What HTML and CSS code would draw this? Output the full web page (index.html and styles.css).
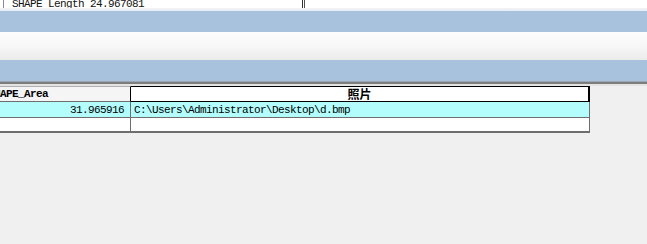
FILE: index.html
```html
<!DOCTYPE html>
<html>
<head>
<meta charset="utf-8">
<link rel="stylesheet" href="styles.css">
</head>
<body>
<div class="top">
  <div class="top-row">
    <div class="top-cell"><span class="top-text">SHAPE Length 24.967081</span></div>
    <div class="top-gap"></div>
    <div class="top-rest"></div>
  </div>
</div>
<div class="top-edge"></div>
<div class="band"></div>
<div class="light"></div>
<div class="band"></div>
<div class="sep"></div>
<div class="sep2"></div>
<div class="grid-view">
  <div class="grid">
    <div class="row head">
      <div class="cell c1 h1">SHAPE_Area</div>
      <div class="cell c2 h2">照片</div>
    </div>
    <div class="row sel">
      <div class="cell c1 num">31.965916</div>
      <div class="cell c2">C:\Users\Administrator\Desktop\d.bmp</div>
    </div>
    <div class="row empty">
      <div class="cell c1"></div>
      <div class="cell c2"></div>
    </div>
  </div>
</div>
</body>
</html>
```
FILE: styles.css
```css
html, body {
  margin: 0;
  padding: 0;
}
body {
  background: #f0f0f0;
  width: 647px;
  height: 244px;
  overflow: hidden;
  font-family: "Liberation Mono", "DejaVu Sans Mono", monospace;
  font-size: 11px;
  letter-spacing: -0.6px;
  color: #000;
}
.top {
  height: 8px;
  overflow: hidden;
  background: #fff;
}
.top-row {
  display: flex;
  height: 14px;
  margin-top: -3px;
  line-height: 14px;
}
.top-cell {
  margin-left: 3px;
  border-left: 1px solid #8a8a8a;
  border-right: 1px solid #303030;
  padding-left: 8px;
  box-sizing: border-box;
  width: 300px;
  color: #111;
}
.top-gap {
  width: 1px;
}
.top-rest {
  flex: 1;
  border-left: 1px solid #505050;
}
.top-edge {
  height: 3px;
  background: linear-gradient(#f2f4f7, #e6ecf2);
}
.band {
  height: 21px;
  background: #a8c2dd;
}
.light {
  height: 28px;
  background: linear-gradient(#fdfdfd, #f7f7f7 50%, #ebebeb);
}
.sep {
  height: 2px;
  background: #7d7d7d;
  border-top: 1px solid #9aa6b2;
}
.sep2 {
  height: 2px;
  background: #e4e4e4;
}
.grid-view {
  overflow: hidden;
  width: 647px;
}
.grid {
  display: flex;
  flex-direction: column;
  margin-left: -14px;
  width: 604px;
}
.row {
  display: flex;
}
.cell {
  box-sizing: border-box;
  white-space: nowrap;
  overflow: hidden;
}
.c1 {
  width: 145px;
  border-right: 1px solid #6e6e6e;
  padding-left: 2px;
}
.c2 {
  width: 459px;
  border-right: 1px solid #6e6e6e;
  padding-left: 3px;
}
.head .cell {
  height: 16px;
  line-height: 14px;
  font-weight: bold;
}
.h1 {
  background: #f5f5f5;
  border-top: 1px solid #b0b0b0;
  border-bottom: 1px solid #6e6e6e;
  border-right: 1px solid #000;
}
.h2 {
  background: #fff;
  border-top: 1px solid #000;
  border-bottom: 1px solid #000;
  border-right: 2px solid #000;
  text-align: center;
  font-family: "Noto Sans CJK SC", sans-serif;
  font-size: 12px;
  letter-spacing: 0;
  padding-left: 0;
}
.sel .cell {
  background: #b3fdfd;
  height: 16px;
  line-height: 15px;
  padding-top: 1px;
  border-bottom: 1px solid #6e6e6e;
}
.num {
  text-align: right;
  padding-right: 6px;
}
.empty .cell {
  background: #fff;
  height: 15px;
  border-bottom: 2px solid #6e6e6e;
}
```
